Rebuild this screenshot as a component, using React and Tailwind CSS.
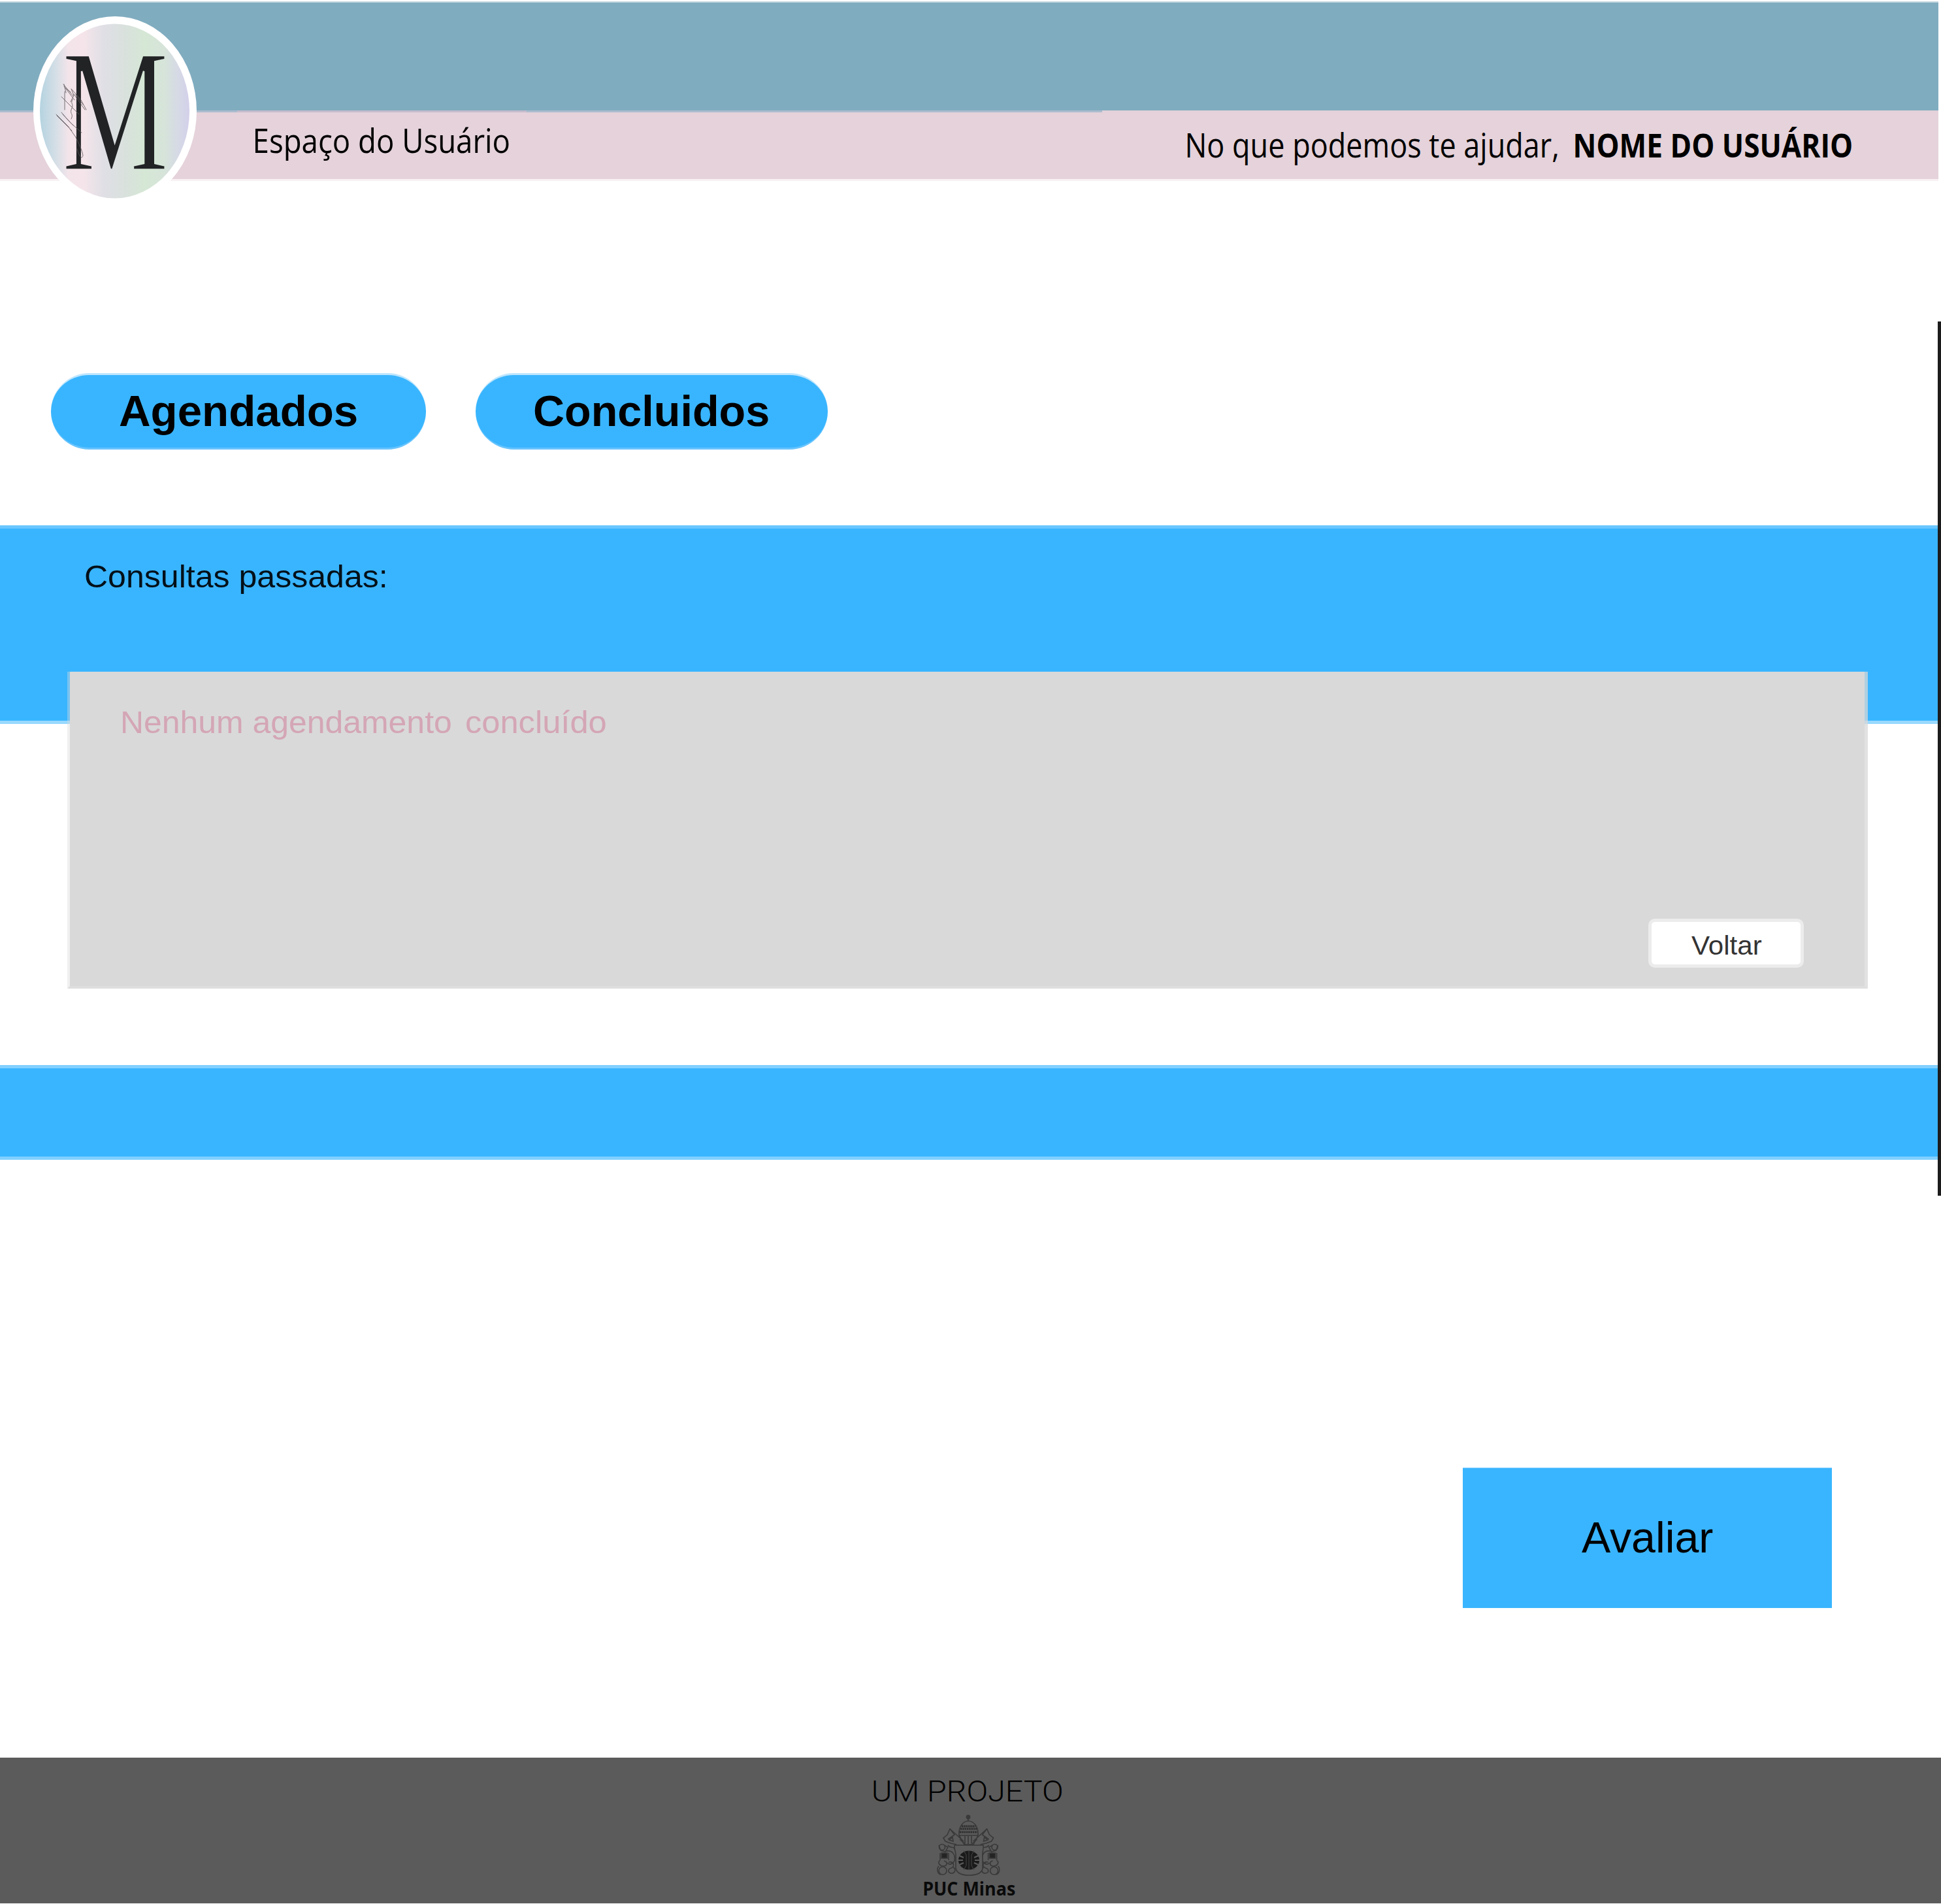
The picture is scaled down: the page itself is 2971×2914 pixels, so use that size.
import { useLayoutEffect, useRef } from "react";

/* Text whose ink spans exactly `width` pixels, starting at the box's left edge. */
function Fit({ width, className = "", children }) {
  const ref = useRef(null);
  useLayoutEffect(() => {
    const el = ref.current;
    const cs = getComputedStyle(el);
    const ctx = document.createElement("canvas").getContext("2d");
    ctx.font = `${cs.fontWeight} ${cs.fontSize} ${cs.fontFamily}`;
    const m = ctx.measureText(children);
    const left = -m.actualBoundingBoxLeft;
    const k = width / (m.actualBoundingBoxRight + m.actualBoundingBoxLeft);
    el.style.transform = `translateX(${left * -k}px) scaleX(${k})`;
  }, [width, children]);
  return (
    <span className="block" style={{ width }}>
      <span ref={ref} className={`inline-block origin-left whitespace-pre leading-none align-top ${className}`}>
        {children}
      </span>
    </span>
  );
}

const sans = "font-['Liberation_Sans',sans-serif]";
const open = "font-['Open_Sans',sans-serif]";

function Logo() {
  return (
    <div className="absolute left-[51px] top-[25px] flex h-[290px] w-[250px] items-center justify-center rounded-[50%] bg-white">
      <svg className="overflow-visible" width="250" height="290" viewBox="51 25 250 290">
        <defs>
          <linearGradient id="pearl" gradientUnits="userSpaceOnUse" x1="61" x2="290" y1="0" y2="0">
            <stop offset="0" stopColor="#b4d3e0" />
            <stop offset="0.1" stopColor="#d3dee6" />
            <stop offset="0.19" stopColor="#f3e4ea" />
            <stop offset="0.29" stopColor="#f5e5ea" />
            <stop offset="0.43" stopColor="#dfdfe5" />
            <stop offset="0.57" stopColor="#d9e1dd" />
            <stop offset="0.7" stopColor="#d5e7d5" />
            <stop offset="0.83" stopColor="#d6e4d9" />
            <stop offset="0.92" stopColor="#d6dae5" />
            <stop offset="1" stopColor="#d3d0ea" />
          </linearGradient>
        </defs>
        <ellipse cx="175.5" cy="170" rx="114.5" ry="133.5" fill="url(#pearl)" />
        <text
          x="95"
          y="260"
          fontFamily="'Liberation Serif', serif"
          fontSize="268"
          fill="#212325"
          stroke="url(#pearl)"
          strokeWidth="3.6"
          textLength="163"
          lengthAdjust="spacingAndGlyphs"
        >
          M
        </text>
        <g fill="none" stroke="#5b5558" strokeWidth="1" opacity="0.8" strokeLinecap="round">
          <path d="M97 129 L112 147 M98 132 L114 153 M100 135 L108 141 M98 129 L101 142 M110 137 L124 153 L132 168 M113 144 L130 168 M116 145 L127 160" />
          <path d="M94 148 L106 160 L121 175 M99 140 L99 168 M109 136 L113 146 L108 156 M111 152 C107 160 114 158 109 168 C107 175 113 174 109 182" />
          <path d="M86 175 L104 193 L116 210 M87 177 L110 200 M89 178 L108 198 M94 172 L108 188 L125 203 M96 175 L112 192" />
          <path d="M116 210 C120 219 126 230 127 238 C125 246 120 236 118 228" />
        </g>
      </svg>
    </div>
  );
}

function Crest() {
  const side = (
    <g>
      <path d="M50 46 L29 27 L25 36 L19 41 L22 46 L30 49 L39 51 M29 27 L36 36 L26 43 M33 40 L28 44 L34 46 Z M44 43 L53 51" />
      <circle cx="17" cy="55" r="4.5" />
      <path d="M12 52 L15 60 L22 62 L26 55 L20 52 M26 52 C30 58 36 52 37 60 M23 61 C32 59 38 66 36 76 C33 81 28 83 25 79" />
      <rect x="16" y="64" width="9" height="8" fill="#242424" />
      <path d="M14 64 V75 M27 64 V75 M14 75 C9 79 14 84 19 84 C25 84 26 77 20 76 M27 78 C34 76 38 84 31 87 C26 88 25 94 31 95 C38 95 38 88 34 86" />
      <circle cx="18" cy="91" r="6" />
      <path d="M12 84 C8 88 10 96 15 97" />
    </g>
  );
  return (
    <svg width="115" height="104" viewBox="0 0 115 104" fill="none" stroke="#393939" strokeWidth="1.6">
      <path d="M57 6 V15 M54 9 H60" strokeWidth="1.8" />
      <circle cx="57" cy="9" r="2.6" />
      <path d="M43 37 C42 23 50 15 57 15 C65 15 73 23 72 37 Z M43 37 L51 51 H65 L72 37 M57 38 V50 M52 38 V49 M62 38 V49" />
      <path d="M47 23 H68 M45 27 H70 M44 32 H71" stroke="#2f2f2f" strokeWidth="2.8" strokeDasharray="2.5 0.8" />
      {side}
      <g transform="translate(114.6 0) scale(-1 1)">{side}</g>
      <path d="M36 52 H80 C81 58 78 63 79 70 V88 C77 96 67 98 58 98 C48 98 40 95 38 88 V67 C38 61 35 58 36 52 Z" fill="#5b5b5b" />
      <ellipse cx="58" cy="75" rx="16" ry="14.5" fill="#1a1a1a" stroke="none" />
      <path d="M41 67 L50 71 M41 75 H49 M41 83 L50 79 M75 67 L66 71 M75 75 H67 M75 83 L66 79" stroke="#5b5b5b" strokeWidth="2" />
      <path d="M50 60 L54 67 V83 L50 90 M66 60 L62 67 V83 L66 90 M58 60 V90" stroke="#444" strokeWidth="1" />
    </svg>
  );
}

export default function App() {
  return (
    <div className="flex h-[2914px] w-[2971px] flex-col overflow-hidden bg-white text-black">
      <header className="relative flex h-[492px] flex-none flex-col">
        <div className="mt-[2px] h-[167px] w-[2967px] border-t-2 border-[#c5d8df] bg-[#80acbf]" />
        <div className="relative flex h-[108px] w-[2967px] justify-between border-b-[3px] border-[#f8f1f4] bg-[#e5d2da] pl-[391px] pr-[133px]">
          <div className="absolute left-0 top-0 flex h-[3px] w-full">
            <div className="w-[363px] bg-[#abbccd]" />
            <div className="w-[443px] bg-[#c5bccd]" />
            <div className="w-[881px] bg-[#abbccd]" />
            <div className="flex-1 bg-[#e2d1db]" />
          </div>
          <div className="pt-[19px]">
            <Fit width={388} className={`${open} text-[52px]`}>Espaço do Usuário</Fit>
          </div>
          <div className="flex gap-[27px] pt-[27px]">
            <Fit width={567} className={`${open} text-[51px]`}>No que podemos te ajudar,</Fit>
            <Fit width={423} className={`${open} text-[51px] font-bold`}>NOME DO USUÁRIO</Fit>
          </div>
        </div>
        <Logo />
      </header>

      <div className="flex h-[1338px] flex-none">
        <main className="flex w-[2966px] flex-col">
          <nav className="flex gap-[76px] pl-[78px] pt-[79px]">
            <button className="flex h-[117px] w-[574px] rounded-full border-y-[3px] border-t-[#bfe6fd] border-b-[#68c4fe] bg-[#39b5ff] pl-[105px] pt-[21px]">
              <Fit width={363} className={`${sans} text-[67px] font-bold`}>Agendados</Fit>
            </button>
            <button className="flex h-[117px] w-[539px] rounded-full border-y-[3px] border-t-[#bfe6fd] border-b-[#68c4fe] bg-[#39b5ff] pl-[90px] pt-[21px]">
              <Fit width={358} className={`${sans} text-[67px] font-bold`}>Concluidos</Fit>
            </button>
          </nav>

          <section className="mt-[116px] h-[304px] flex-none border-y-[5px] border-t-[#69c6ff] border-b-[#98d8fe] bg-[#39b5ff] pl-[131px] pt-[49px]">
            <Fit width={459} className={`${sans} text-[49px] text-[#041018]`}>Consultas passadas:</Fit>
          </section>

          <section className="relative ml-[103px] mt-[-80px] flex h-[485px] w-[2756px] flex-none flex-col border-b-4 border-l-4 border-r-[5px] border-b-[#d9d9d9]/85 border-l-[#d9d9d9]/40 border-r-[#d9d9d9]/75 bg-[#d9d9d9] bg-clip-padding pl-[80px] pt-[54px]">
            <div className="flex gap-[24px]">
              <Fit width={503} className={`${sans} text-[48px] text-[#d4a6b5]`}>Nenhum agendamento</Fit>
              <Fit width={213} className={`${sans} text-[48px] text-[#d4a6b5]`}>concluído</Fit>
            </div>
            <button className="ml-[2336px] mt-[276px] h-[75px] w-[238px] rounded-[10px] border-[5px] border-[#ececec] bg-white pl-[60px] pt-[8px]">
              <Fit width={107} className={`${sans} text-[41px] text-[#333]`}>Voltar</Fit>
            </button>
          </section>

          <div className="mt-[117px] h-[145px] flex-none border-y-[5px] border-[#82d0ff] bg-[#39b5ff]" />
        </main>
        <div className="w-[5px] bg-[#1c1c1c]" />
      </div>

      <div className="flex h-[860px] flex-none justify-end pr-[167px] pt-[416px]">
        <button className="flex h-[215px] w-[565px] border-t border-[#8fd3fd] bg-[#39b5ff] pl-[182px] pt-[72px]">
          <Fit width={201} className={`${sans} text-[67px]`}>Avaliar</Fit>
        </button>
      </div>

      <footer className="flex h-[223px] flex-none flex-col bg-[#5b5b5b] pt-[29px]">
        <div className="pl-[1337px]">
          <Fit width={288} className="font-['Roboto',sans-serif] text-[45px] font-light">UM PROJETO</Fit>
        </div>
        <div className="mt-[8px] h-[103px] pl-[1425px]">
          <Crest />
        </div>
        <div className="pl-[1414px]">
          <Fit width={140} className={`${open} text-[29px] font-bold text-[#0a0a0a]`}>PUC Minas</Fit>
        </div>
      </footer>
    </div>
  );
}
